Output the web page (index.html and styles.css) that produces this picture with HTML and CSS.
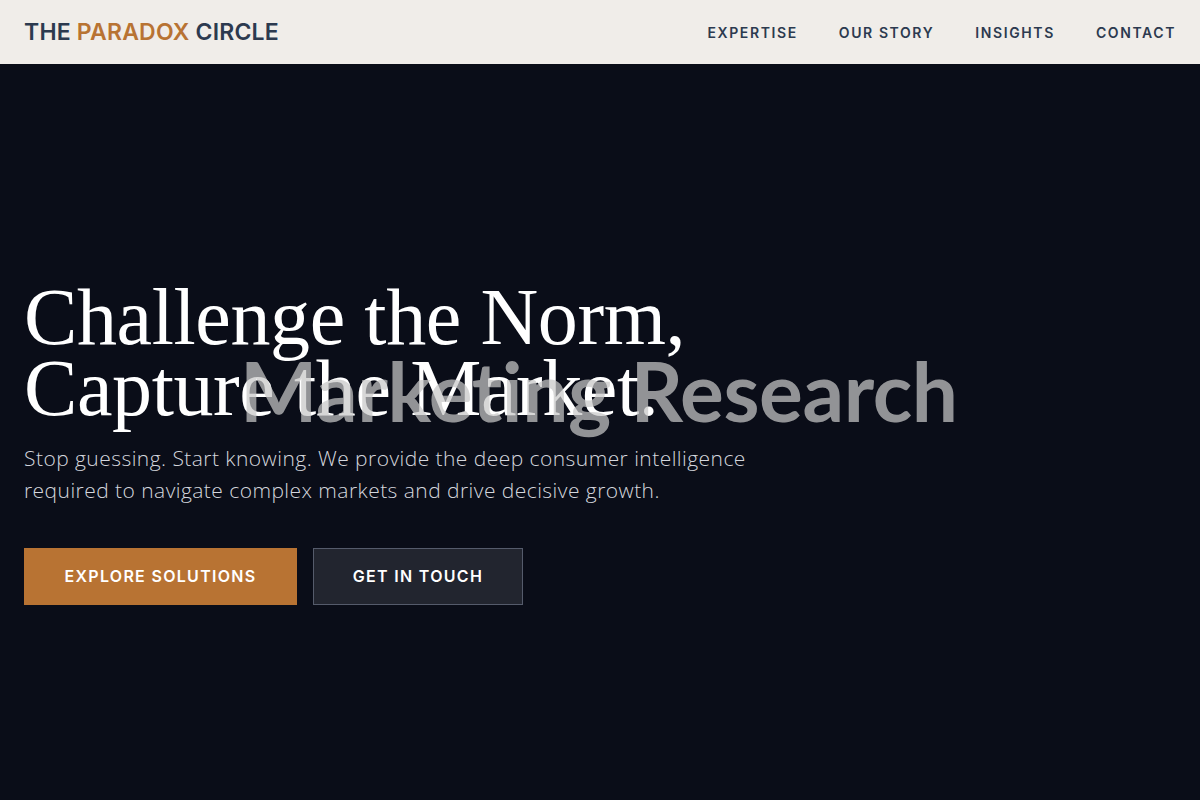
FILE: index.html
```html
<!DOCTYPE html>
<html lang="en">
<head>
    <meta charset="UTF-8">
    <meta name="viewport" content="width=device-width, initial-scale=1.0">
    <title>The Paradox Circle</title>
    <link rel="stylesheet" href="styles.css">
</head>
<body>
    <header class="site-header">
        <a class="logo" href="#">THE <span class="accent">PARADOX</span> CIRCLE</a>
        <nav class="main-nav">
            <a href="#">EXPERTISE</a>
            <a href="#">OUR STORY</a>
            <a href="#">INSIGHTS</a>
            <a href="#">CONTACT</a>
        </nav>
    </header>

    <!-- Hero -->
    <section class="hero">
        <div class="hero-inner">
            <div class="headline-wrap">
                <h1 class="headline">Challenge the Norm,<br>Capture the Market.</h1>
                <span class="rotating-word">Marketing Research</span>
            </div>
            <p class="lead">Stop guessing. Start knowing. We provide the deep consumer intelligence required to navigate complex markets and drive decisive growth.</p>
            <div class="actions">
                <a class="btn btn-primary" href="#">EXPLORE SOLUTIONS</a>
                <a class="btn btn-ghost" href="#">GET IN TOUCH</a>
            </div>
        </div>
    </section>
</body>
</html>
```

FILE: styles.css
```css
body {
    margin: 0;
    background: #0a0d18;
    font-family: Inter, "Open Sans", sans-serif;
    color: white;
}
a {
    text-decoration: none;
}
.site-header {
    height: 64px;
    background: #f0ede9;
    display: flex;
    align-items: center;
    justify-content: space-between;
    padding: 0 24px;
}
.logo {
    font-size: 23px;
    font-weight: 600;
    color: #2c3a4f;
    letter-spacing: 0.2px;
}
.logo .accent {
    color: #b87333;
}
.main-nav {
    display: flex;
    gap: 41px;
}
.main-nav a {
    font-size: 14px;
    font-weight: 600;
    letter-spacing: 1.6px;
    color: #2c3a4f;
}
.hero {
    height: 736px;
    display: flex;
    align-items: center;
    padding: 0 24px;
}
.hero-inner {
    margin-top: 22px;
}
.headline-wrap {
    position: relative;
}
.headline {
    margin: 0;
    font-family: "Liberation Serif", serif;
    font-weight: 400;
    font-size: 80px;
    line-height: 71px;
    letter-spacing: -0.4px;
    position: relative;
    z-index: 0;
}
.rotating-word {
    position: absolute;
    left: 216px;
    top: 59px;
    font-family: Lato, sans-serif;
    font-weight: 700;
    font-size: 82px;
    color: rgba(200, 200, 200, 0.72);
    white-space: nowrap;
    letter-spacing: -0.4px;
}
.lead {
    margin: 18px 0 0;
    max-width: 745px;
    font-family: "Open Sans", sans-serif;
    font-weight: 300;
    font-size: 21px;
    line-height: 32px;
    letter-spacing: 0.45px;
    color: #d4d6dd;
}
.actions {
    display: flex;
    gap: 16px;
    margin-top: 42px;
}
.btn {
    display: inline-block;
    height: 57px;
    line-height: 57px;
    box-sizing: border-box;
    font-size: 16px;
    font-weight: 600;
    letter-spacing: 1.3px;
    color: white;
    text-align: center;
}
.btn-primary {
    width: 273px;
    background: #b87333;
}
.btn-ghost {
    width: 210px;
    line-height: 55px;
    background: #22252f;
    border: 1px solid #555b6b;
}
```
